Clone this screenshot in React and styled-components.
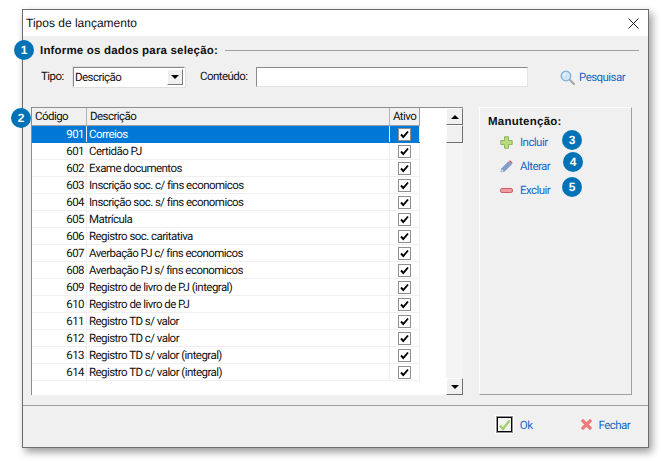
import React from "react"
import styled, { createGlobalStyle } from "styled-components"

const Global = createGlobalStyle`
  html, body {
    margin: 0;
    padding: 0;
    background: #fff;
    font-family: Roboto, "Liberation Sans", Arial, sans-serif;
    font-size: 11.5px;
    letter-spacing: -0.55px;
    color: #111;
    text-rendering: geometricPrecision;
  }
`

const Page = styled.div`
  width: 661px;
  height: 461px;
  padding: 9px 0 0 22px;
  box-sizing: border-box;
  overflow: hidden;
`

const Dialog = styled.div`
  width: 627px;
  height: 439px;
  box-sizing: border-box;
  border: 1px solid #6d6d6d;
  background: #f0f0f0;
  box-shadow: 3px 4px 8px rgba(0, 0, 0, 0.4);
  display: flex;
  flex-direction: column;
`

const TitleBar = styled.div`
  height: 26px;
  background: #fff;
  display: flex;
  align-items: center;
  justify-content: space-between;
  padding: 0 9px 0 3px;
  flex-shrink: 0;
`

const Title = styled.div`
  font-family: "Liberation Sans", Arial, sans-serif;
  font-size: 12px;
  letter-spacing: 0;
`

const Body = styled.div`
  height: 369px;
  flex-shrink: 0;
  padding: 0 8px;
  box-sizing: border-box;
  display: flex;
  flex-direction: column;
  position: relative;
`

const SectionHead = styled.div`
  height: 33px;
  padding: 0 1px 0 9px;
  display: flex;
  align-items: center;
  gap: 7px;
  margin-top: -2px;
`

const SectionTitle = styled.div`
  font-family: "Liberation Sans", Arial, sans-serif;
  font-weight: bold;
  font-size: 11.5px;
  letter-spacing: 0.18px;
`

const Rule = styled.div`
  flex: 1;
  height: 1px;
  background: #a0a0a0;
`

const FilterRow = styled.div`
  height: 24px;
  display: flex;
  align-items: center;
  padding-left: 10px;
  margin-top: -2px;
`

const Label = styled.div`
  margin-top: -3px;
  width: ${p => p.$w}px;
`

const Select = styled.div`
  width: 112px;
  height: 20px;
  box-sizing: border-box;
  background: #fff;
  border: 1px solid;
  border-color: #8a8a8a #fff #fff #8a8a8a;
  box-shadow: 0 0 0 0.5px #d0d0d0;
  display: flex;
  align-items: center;
  justify-content: space-between;
  padding: 1px 1px 1px 1px;
`

const ArrowBox = styled.div`
  width: 16px;
  height: 16px;
  background: #f0f0f0;
  border: 1px solid;
  border-color: #fff #7a7a7a #7a7a7a #fff;
  box-sizing: border-box;
  display: flex;
  align-items: center;
  justify-content: center;
`

const Arrow = styled.div`
  width: 0;
  height: 0;
  border-left: 4px solid transparent;
  border-right: 4px solid transparent;
  border-${p => (p.$up ? "bottom" : "top")}: 4px solid #000;
`

const ContentLabel = styled(Label)`
  margin-left: 15px;
`

const TextBox = styled.div`
  width: 272px;
  height: 20px;
  box-sizing: border-box;
  background: #fff;
  border: 1px solid;
  border-color: #8a8a8a #e4e4e4 #e4e4e4 #8a8a8a;
`

const LinkButton = styled.div`
  display: flex;
  align-items: center;
  color: #1569c7;
  gap: ${p => p.$gap || 6}px;
  margin-left: ${p => p.$left || 0}px;
`

const Main = styled.div`
  display: flex;
  margin-top: 18px;
`

const ListFrame = styled.div`
  width: 432px;
  height: 288px;
  box-sizing: border-box;
  border-top: 1px solid #8f8f8f;
  border-left: 1px solid #8f8f8f;
  display: flex;
  background: #fff;
`

const Grid = styled.div`
  flex: 1;
  display: flex;
  flex-direction: column;
`

const HeaderRow = styled.div`
  display: flex;
  height: 17px;
  width: 388px;
  background: #f0f0f0;
  border-bottom: 1px solid #a0a0a0;
  box-sizing: content-box;
`

const HeaderCell = styled.div`
  width: ${p => p.$w}px;
  box-sizing: border-box;
  padding-left: ${p => p.$pad || 3}px;
  border-right: 1px solid ${p => (p.$last ? "#a0a0a0" : "#b4b4b4")};
  line-height: 17px;
  height: 17px;
`

const Row = styled.div`
  display: flex;
  height: 17px;
  width: 388px;
  box-sizing: border-box;
  border-bottom: 1px solid ${p => (p.$sel ? "#0078d7" : "#efefef")};
  background: ${p => (p.$sel ? "#0078d7" : "#fff")};
  color: ${p => (p.$sel ? "#fff" : "#111")};
  line-height: 16px;
`

const CodeCell = styled.div`
  width: 55px;
  box-sizing: border-box;
  text-align: right;
  padding-right: 2px;
  border-right: 1px solid #efefef;
`

const DescCell = styled.div`
  width: 303px;
  box-sizing: border-box;
  padding-left: 2px;
  border-right: 1px solid #efefef;
  white-space: nowrap;
`

const CheckCell = styled.div`
  width: 30px;
  box-sizing: border-box;
  border-right: 1px solid #efefef;
  display: flex;
  align-items: center;
  justify-content: center;
`

const CheckBox = styled.div`
  width: 13px;
  height: 13px;
  box-sizing: border-box;
  background: #fff;
  border: 1px solid #8f8f8f;
  display: flex;
  align-items: center;
  justify-content: center;
`

const ScrollBar = styled.div`
  width: 17px;
  margin-left: auto;
  display: flex;
  flex-direction: column;
  background-color: #f4f4f4;
  background-image: radial-gradient(#e2e2e2 0.5px, transparent 0.6px);
  background-size: 2px 2px;
`

const ScrollButton = styled.div`
  width: 17px;
  height: 17px;
  box-sizing: border-box;
  background: #f0f0f0;
  border: 1px solid;
  border-color: #fff #707070 #707070 #fff;
  display: flex;
  align-items: center;
  justify-content: center;
  flex-shrink: 0;
`

const ScrollThumb = styled(ScrollButton)`
  height: 18px;
`

const Spacer = styled.div`
  flex: 1;
`

const SidePanel = styled.div`
  width: 153px;
  height: 288px;
  margin-left: 16px;
  box-sizing: border-box;
  border: 1px solid;
  border-color: #fff #a0a0a0 #a0a0a0 #fff;
  padding: 8px 0 0 8px;
`

const PanelTitle = styled.div`
  font-family: "Liberation Sans", Arial, sans-serif;
  font-weight: bold;
  font-size: 11.5px;
  letter-spacing: 0.25px;
  margin-bottom: 2px;
`

const PanelItem = styled(LinkButton)`
  height: 24px;
  padding-left: 12px;
`

const Footer = styled.div`
  flex: 1;
  border-top: 1px solid #a0a0a0;
  display: flex;
  align-items: center;
  justify-content: flex-end;
  padding: 0 18px 4px 0;
`

const OkIcon = styled.div`
  width: 17px;
  height: 17px;
  box-sizing: border-box;
  border: 1px solid #8f8f8f;
  outline: 1px solid #fff;
  display: flex;
`

const Badge = styled.div`
  position: absolute;
  left: ${p => p.$x}px;
  top: ${p => p.$y}px;
  width: 20px;
  height: 20px;
  border-radius: 50%;
  background: #0072b5;
  color: #fff;
  font-family: "Liberation Sans", Arial, sans-serif;
  font-weight: bold;
  font-size: 12px;
  letter-spacing: 0;
  line-height: 20px;
  text-align: center;
`

const CloseIcon = () => (
  <svg width="11" height="11" viewBox="0 0 11 11">
    <path d="M0.5 0.5L10.5 10.5M10.5 0.5L0.5 10.5" stroke="#222" strokeWidth="1" fill="none" />
  </svg>
)

const SearchIcon = () => (
  <svg width="15" height="15" viewBox="0 0 15 15">
    <path d="M9.5 9.5L14 14" stroke="#a9a9a9" strokeWidth="2.2" strokeLinecap="round" />
    <circle cx="6" cy="6" r="4.8" fill="#cfe5f7" stroke="#7fb0dc" strokeWidth="1.3" />
    <path d="M3.5 5.5a2.8 2.8 0 0 1 2.5-2" stroke="#fff" strokeWidth="1.2" fill="none" />
  </svg>
)

const PlusIcon = () => (
  <svg width="13" height="13" viewBox="0 0 13 13">
    <path d="M4.5 0.8h4v3.7h3.7v4H8.5v3.7h-4V8.5H0.8v-4h3.7z" fill="#b9dc7e" stroke="#8fb45a" strokeWidth="1" />
  </svg>
)

const PencilIcon = () => (
  <svg width="13" height="13" viewBox="0 0 13 13">
    <path d="M1 12l0.8-3.5L8.5 1.8l2.7 2.7L4.5 11.2z" fill="#7f9fd0" stroke="#6a86b5" strokeWidth="0.7" />
    <path d="M9 1.3l1-1 2.7 2.7-1 1z" fill="#d9475a" />
    <path d="M1 12l0.8-3 2.2 2.2z" fill="#d9d9d9" />
  </svg>
)

const MinusIcon = () => (
  <svg width="13" height="13" viewBox="0 0 13 13">
    <rect x="0.5" y="4.5" width="12" height="4" rx="1.6" fill="#f09ba0" stroke="#cf6068" strokeWidth="1" />
  </svg>
)

const CheckMark = () => (
  <svg width="9" height="9" viewBox="0 0 9 9">
    <path d="M1 4.5L3.3 7L8 1.5" stroke="#000" strokeWidth="1.9" fill="none" />
  </svg>
)

const GreenCheck = () => (
  <svg width="15" height="15" viewBox="0 0 15 15">
    <rect x="0.5" y="0.5" width="14" height="14" fill="#f3f3f3" stroke="#000" />
    <path d="M3 8.5L6 12L12.5 3.5" stroke="#a5cf73" strokeWidth="2.6" fill="none" />
  </svg>
)

const RedCross = () => (
  <svg width="11" height="11" viewBox="0 0 11 11">
    <path d="M2 2L9 9M9 2L2 9" stroke="#ee7a7a" strokeWidth="3.2" strokeLinecap="square" fill="none" />
  </svg>
)

const rows = [
  ["901", "Correios"],
  ["601", "Certidão PJ"],
  ["602", "Exame documentos"],
  ["603", "Inscrição soc. c/ fins economicos"],
  ["604", "Inscrição soc. s/ fins economicos"],
  ["605", "Matrícula"],
  ["606", "Registro soc. caritativa"],
  ["607", "Averbação PJ c/ fins economicos"],
  ["608", "Averbação PJ s/ fins economicos"],
  ["609", "Registro de livro de PJ (integral)"],
  ["610", "Registro de livro de PJ"],
  ["611", "Registro TD s/ valor"],
  ["612", "Registro TD c/ valor"],
  ["613", "Registro TD s/ valor (integral)"],
  ["614", "Registro TD c/ valor (integral)"],
]

const App = () => (
  <Page>
    <Global />
    <Dialog>
      <TitleBar>
        <Title>Tipos de lançamento</Title>
        <CloseIcon />
      </TitleBar>
      <Body>
        <Badge $x={-9} $y={4}>1</Badge>
        <Badge $x={-12} $y={72}>2</Badge>
        <Badge $x={539} $y={94}>3</Badge>
        <Badge $x={540} $y={116}>4</Badge>
        <Badge $x={539} $y={141}>5</Badge>
        <SectionHead>
          <SectionTitle>Informe os dados para seleção:</SectionTitle>
          <Rule />
        </SectionHead>
        <FilterRow>
          <Label $w={32}>Tipo:</Label>
          <Select>
            Descrição
            <ArrowBox><Arrow /></ArrowBox>
          </Select>
          <ContentLabel $w={56}>Conteúdo:</ContentLabel>
          <TextBox />
          <LinkButton $left={32} $gap={4}>
            <SearchIcon />
            Pesquisar
          </LinkButton>
        </FilterRow>
        <Main>
          <ListFrame>
            <Grid>
              <HeaderRow>
                <HeaderCell $w={55}>Código</HeaderCell>
                <HeaderCell $w={303}>Descrição</HeaderCell>
                <HeaderCell $w={30} $last>Ativo</HeaderCell>
              </HeaderRow>
              {rows.map(([code, desc], i) => (
                <Row key={code} $sel={i === 0}>
                  <CodeCell>{code}</CodeCell>
                  <DescCell>{desc}</DescCell>
                  <CheckCell>
                    <CheckBox><CheckMark /></CheckBox>
                  </CheckCell>
                </Row>
              ))}
            </Grid>
            <ScrollBar>
              <ScrollButton><Arrow $up /></ScrollButton>
              <ScrollThumb />
              <Spacer />
              <ScrollButton><Arrow /></ScrollButton>
            </ScrollBar>
          </ListFrame>
          <SidePanel>
            <PanelTitle>Manutenção:</PanelTitle>
            <PanelItem $gap={7}><PlusIcon />Incluir</PanelItem>
            <PanelItem $gap={7}><PencilIcon />Alterar</PanelItem>
            <PanelItem $gap={7}><MinusIcon />Excluir</PanelItem>
          </SidePanel>
        </Main>
      </Body>
      <Footer>
        <LinkButton $gap={7}>
          <OkIcon><GreenCheck /></OkIcon>
          Ok
        </LinkButton>
        <LinkButton $left={49} $gap={6}>
          <RedCross />
          Fechar
        </LinkButton>
      </Footer>
    </Dialog>
  </Page>
)

export default App
